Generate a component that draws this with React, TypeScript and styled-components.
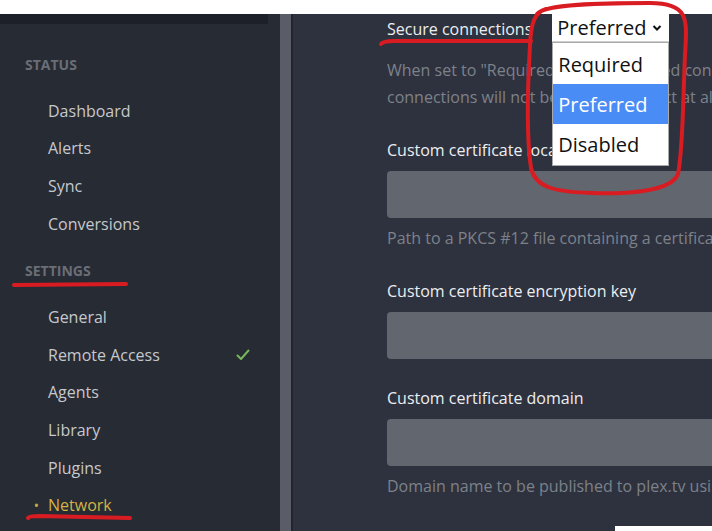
import React from 'react'
import styled, {createGlobalStyle} from 'styled-components'

const GlobalStyle = createGlobalStyle`
  html, body {
    margin: 0;
    padding: 0;
    background: #2e323e;
    overflow: hidden;
  }
  body {
    font-family: "Open Sans", "Noto Sans", sans-serif;
  }
`

const statusItems = ['Dashboard', 'Alerts', 'Sync', 'Conversions']
const settingsItems = ['General', 'Remote Access', 'Agents', 'Library', 'Plugins', 'Network']
const options = ['Required', 'Preferred', 'Disabled']

const App: React.FC = () => {
  return (
    <Frame>
      <GlobalStyle />
      <TopStrip />
      <Body>
        <Sidebar>
          <SidebarTopBar />
          <Nav>
            <NavSection>
              <NavHeading>Status</NavHeading>
              {statusItems.map(item => (
                <NavItem key={item}>
                  <Marker />
                  <span>{item}</span>
                </NavItem>
              ))}
            </NavSection>
            <NavSection $spaced>
              <NavHeading>Settings</NavHeading>
              {settingsItems.map(item => (
                <NavItem key={item} $active={item === 'Network'}>
                  <Marker>{item === 'Network' ? '•' : ''}</Marker>
                  <span>{item}</span>
                  {item === 'Remote Access' && <Check />}
                </NavItem>
              ))}
            </NavSection>
          </Nav>
        </Sidebar>
        <ScrollTrack />
        <Divider />
        <Main>
          <SecureRow>
            <SecureLabel>Secure connections</SecureLabel>
            <SelectWrap>
              <SelectBox>
                <span>Preferred</span>
                <svg width="10" height="8" viewBox="0 0 10 8">
                  <polyline points="1.5,2 5,5.5 8.5,2" fill="none" stroke="#111" strokeWidth="2" />
                </svg>
              </SelectBox>
              <OptionList>
                {options.map(opt => (
                  <OptionItem key={opt} $selected={opt === 'Preferred'}>{opt}</OptionItem>
                ))}
              </OptionList>
            </SelectWrap>
          </SecureRow>
          <Help $first>
            <HelpLine>When set to "Required", only encrypted connections will be allowed, and apps that don't support encrypted</HelpLine>
            <HelpLine>connections will not be able to connect at all.</HelpLine>
          </Help>

          <Field>
            <FieldLabel>Custom certificate location</FieldLabel>
            <TextInput />
            <Help>
              <HelpLine>Path to a PKCS #12 file containing a certificate and private key to enable TLS support on a custom domain.</HelpLine>
            </Help>
          </Field>

          <Field>
            <FieldLabel>Custom certificate encryption key</FieldLabel>
            <TextInput />
          </Field>

          <Field>
            <FieldLabel>Custom certificate domain</FieldLabel>
            <TextInput />
            <Help>
              <HelpLine>Domain name to be published to plex.tv using your mapped port; must match a name from the custom certificate file.</HelpLine>
            </Help>
          </Field>

          <ButtonRow>
            <SaveButton>Save Changes</SaveButton>
          </ButtonRow>
        </Main>
      </Body>
      <Annotations />
    </Frame>
  )
}

const Check: React.FC = () => (
  <CheckIcon width="14" height="12" viewBox="0 0 14 12">
    <polyline points="1.5,6.5 5,10 12.5,1.5" fill="none" stroke="#79b85a" strokeWidth="2" strokeLinecap="round" strokeLinejoin="round" />
  </CheckIcon>
)

const Annotations: React.FC = () => (
  <Overlay viewBox="0 0 712 531" width="712" height="531">
    <g fill="none" stroke="#d91c22" strokeWidth="4" strokeLinecap="round" strokeLinejoin="round">
      <path d="M381 44 Q 383 41 394 41 L 531 41" />
      <path d="M14 285 L 126 284" />
      <path d="M28 518 Q 29 516 40 516 L 130 518" />
      <path d="M537 14 C 545 4, 600 3, 650 3 C 690 3, 687 20, 685 55 C 683 100, 683 150, 678 174 C 671 192, 625 194, 592 193 C 554 192, 535 187, 531 168 C 526 135, 528 80, 530 45 C 531 22, 535 12, 546 9" />
    </g>
  </Overlay>
)

const Frame = styled.div`
  position: relative;
  width: 712px;
  height: 531px;
  display: flex;
  flex-direction: column;
  overflow: hidden;
  background: #2e323e;
`

const TopStrip = styled.div`
  height: 14px;
  flex: none;
  background: #ffffff;
`

const Body = styled.div`
  flex: 1;
  display: flex;
  min-height: 0;
`

const Sidebar = styled.aside`
  width: 280px;
  flex: none;
  background: #272b34;
  display: flex;
  flex-direction: column;
`

const SidebarTopBar = styled.div`
  height: 10px;
  width: 268px;
  background: #1d2028;
`

const Nav = styled.nav`
  padding: 31px 30px 0 25px;
`

const NavSection = styled.div<{$spaced?: boolean}>`
  margin-top: ${p => (p.$spaced ? '19px' : '0')};
`

const NavHeading = styled.div`
  font-size: 14px;
  font-weight: 700;
  line-height: 20px;
  text-transform: uppercase;
  color: #6a6e77;
  margin-bottom: 17px;
`

const NavItem = styled.div<{$active?: boolean}>`
  height: 37.6px;
  display: grid;
  grid-template-columns: 23px 1fr auto;
  align-items: center;
  font-size: 16px;
  color: ${p => (p.$active ? '#d3b343' : '#c6c8cc')};
`

const Marker = styled.span`
  font-size: 14px;
  text-align: center;
  color: #c9ab45;
`

const CheckIcon = styled.svg`
  display: block;
`

const ScrollTrack = styled.div`
  width: 11px;
  flex: none;
  background: #5a5d67;
`

const Divider = styled.div`
  width: 2px;
  flex: none;
  background: #22252d;
`

const Main = styled.main`
  flex: 1;
  min-width: 0;
  overflow: hidden;
  padding-left: 94px;
  background: #2e323e;
`

const SecureRow = styled.div`
  display: flex;
  align-items: center;
  height: 28px;
  gap: 20px;
`

const FieldLabel = styled.div`
  font-size: 16px;
  font-weight: 400;
  line-height: 22px;
  color: #eceef0;
  white-space: nowrap;
`

const SecureLabel = styled(FieldLabel)`
  padding-top: 2px;
`

const SelectWrap = styled.div`
  position: relative;
  width: 117px;
  height: 28px;
  flex: none;
  z-index: 2;
`

const SelectBox = styled.div`
  height: 28px;
  box-sizing: border-box;
  background: #ffffff;
  border-bottom: 1px solid #cfcfcf;
  display: flex;
  align-items: center;
  justify-content: space-between;
  padding: 0 7px 0 5px;
  font-size: 20px;
  color: #111;
`

const OptionList = styled.div`
  position: absolute;
  top: 28px;
  left: 0;
  width: 117px;
  box-sizing: border-box;
  background: #ffffff;
  border: 1px solid #a9a9a9;
  padding: 1px 0;
`

const OptionItem = styled.div<{$selected?: boolean}>`
  height: 40px;
  display: flex;
  align-items: center;
  padding-left: 5px;
  font-size: 20px;
  color: ${p => (p.$selected ? '#ffffff' : '#111')};
  background: ${p => (p.$selected ? '#4a8cf6' : 'transparent')};
`

const Help = styled.div<{$first?: boolean}>`
  margin-top: ${p => (p.$first ? '14.5px' : '7px')};
  font-size: 16px;
  line-height: 27px;
  color: #7d818a;
`

const HelpLine = styled.div`
  white-space: nowrap;
`

const Field = styled.div`
  margin-top: 28px;
`

const TextInput = styled.div`
  margin-top: 10px;
  width: 600px;
  height: 47px;
  border-radius: 4px;
  background: #62666f;
`

const ButtonRow = styled.div`
  margin-top: 26px;
  padding-left: 228px;
`

const SaveButton = styled.div`
  width: 140px;
  height: 36px;
  background: #ffffff;
  color: #1f1f1f;
  font-size: 15px;
  display: flex;
  align-items: center;
  justify-content: center;
`

const Overlay = styled.svg`
  position: absolute;
  inset: 0;
  pointer-events: none;
  z-index: 5;
`

export default App
